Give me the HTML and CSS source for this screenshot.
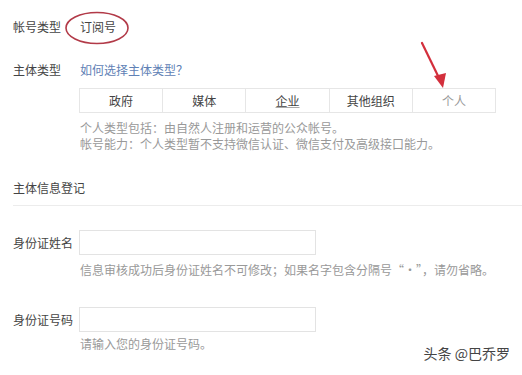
FILE: index.html
```html
<!DOCTYPE html>
<html lang="zh-CN">
<head>
    <meta charset="UTF-8">
    <meta name="viewport" content="width=device-width, initial-scale=1.0">
    <title>主体信息登记</title>
    <link rel="stylesheet" href="styles.css">
</head>
<body>
    <div class="page">
        <div class="row row-type">
            <span class="label">帐号类型</span>
            <span class="value">订阅号</span>
        </div>

        <div class="row row-subject">
            <span class="label">主体类型</span>
            <a href="#" class="link">如何选择主体类型？</a>
        </div>

        <div class="field-body">
            <div class="tabs">
                <span class="tab">政府</span>
                <span class="tab">媒体</span>
                <span class="tab tab-hover">企业</span>
                <span class="tab">其他组织</span>
                <span class="tab tab-current">个人</span>
            </div>
            <p class="tips">个人类型包括：由自然人注册和运营的公众帐号。<br>帐号能力：个人类型暂不支持微信认证、微信支付及高级接口能力。</p>
        </div>

        <h3 class="section-title">主体信息登记</h3>
        <div class="divider"></div>

        <div class="row form-row first">
            <span class="label">身份证姓名</span>
            <span class="input"></span>
        </div>
        <p class="hint">信息审核成功后身份证姓名不可修改；如果名字包含分隔号“·”，请勿省略。</p>

        <div class="row form-row second">
            <span class="label">身份证号码</span>
            <span class="input"></span>
        </div>
        <p class="hint">请输入您的身份证号码。</p>

        <!-- annotations drawn over the screenshot -->
        <svg class="mark-circle" width="70" height="36" viewBox="0 0 70 36">
            <ellipse cx="35" cy="18" rx="31" ry="15.5" fill="none" stroke="#b23a48" stroke-width="1.6"/>
        </svg>
        <svg class="mark-arrow" width="34" height="52" viewBox="0 0 34 52">
            <line x1="4" y1="3" x2="22" y2="40" stroke="#d32f3c" stroke-width="2.2" stroke-linecap="round"/>
            <polygon points="16,36 28,33 25,48" fill="#d32f3c"/>
        </svg>

        <div class="watermark">头条 @巴乔罗</div>
    </div>
</body>
</html>
```

FILE: styles.css
```css
body { margin: 0; background: #fff; font-family: "Noto Sans CJK SC", "Noto Sans", sans-serif; font-size: 12px; color: #444; }
.page { position: relative; width: 522px; height: 375px; overflow: hidden; padding-left: 13px; box-sizing: border-box; }
.row { display: flex; align-items: center; line-height: 20px; }
.label { width: 66px; flex-shrink: 0; color: #444; }
.value { color: #444; padding-left: 1px; }
.row-type { margin-top: 17px; }
.row-subject { margin-top: 23px; }
.link { color: #6081b5; text-decoration: none; padding-left: 1px; }

.field-body { padding-left: 66px; }
.tabs { display: flex; width: 417px; height: 25px; margin-top: 8px; border: 1px solid #e6e6e6; box-sizing: border-box; }
.tab { flex: 1; display: flex; align-items: center; justify-content: center; border-left: 1px solid #e6e6e6; color: #444; }
.tab:first-child { border-left: none; }
.tab-hover { text-decoration: underline; text-decoration-color: #aaa; }
.tab-current { color: #999; }
.tips { margin: 7px 0 0; padding-left: 1px; line-height: 16px; color: #999; }

.section-title { margin: 26px 0 0; font-size: 12px; font-weight: normal; line-height: 20px; color: #444; }
.divider { margin-top: 7px; border-top: 1px solid #ececec; }

.form-row.first { margin-top: 24px; }
.form-row.second { margin-top: 29px; }
.input { display: block; width: 237px; height: 25px; border: 1px solid #e3e3e3; box-sizing: border-box; background: #fff; }
.hint { margin: 7px 0 0 67px; line-height: 16px; color: #999; }
.form-row.second + .hint { margin-top: 4px; }

.mark-circle { position: absolute; left: 62px; top: 10px; }
.mark-arrow { position: absolute; left: 418px; top: 40px; }
.watermark { position: absolute; right: 12px; bottom: 12px; font-size: 14px; color: #444; }
```
